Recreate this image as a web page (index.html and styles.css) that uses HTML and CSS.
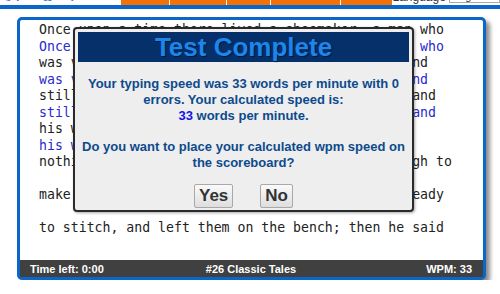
FILE: index.html
```html
<!DOCTYPE html>
<html lang="en">
  <head>
    <meta charset="UTF-8" />
    <title>Typing Test</title>
    <link rel="stylesheet" href="styles.css">
  </head>
  <body>
    <div class="site-header">
      <div class="logo">typing-speed-test.net</div>
      <nav class="menu">
        <a href="#"></a>
        <a href="#"></a>
        <a href="#"></a>
        <a href="#"></a>
        <a href="#"></a>
      </nav>
      <div class="lang">
        <span>Language</span>
        <span class="lang-select">English &#9662;</span>
      </div>
    </div>
    <div class="rule"></div>

    <div class="panel">
      <div class="passage">
        <div class="line">Once upon a time there lived a shoemaker, a man who</div>
        <div class="line typed">Once upon a time there lived a shoemaker, a man who</div>
        <div class="line">was very honest and hard working, yet so poor and</div>
        <div class="line typed">was very honest and hard working, yet so poor and</div>
        <div class="line">still became poorer, until he had nothing left and</div>
        <div class="line typed">still became poorer, until he had nothing left and</div>
        <div class="line">his whole stock was leather for a single pair</div>
        <div class="line typed">his whole stock was leather for a single pair</div>
        <div class="line">nothing more. That evening he cut out just enough to</div>
        <div class="line"></div>
        <div class="line">make one pair of shoes, then laid the leather ready</div>
        <div class="line"></div>
        <div class="line">to stitch, and left them on the bench; then he said</div>
      </div>
      <div class="status">
        <span>Time left: 0:00</span>
        <span class="status-title">#26 Classic Tales</span>
        <span class="status-wpm">WPM: 33</span>
      </div>

      <!-- result dialog -->
      <div class="dialog">
        <h2 class="dialog-title">Test Complete</h2>
        <div class="dialog-body">
          <p>Your typing speed was 33 words per minute with 0 errors. Your calculated speed is:<br><span class="speed">33</span> words per minute.</p>
          <p>Do you want to place your calculated wpm speed on the scoreboard?</p>
        </div>
        <div class="dialog-buttons">
          <button type="button">Yes</button>
          <button type="button">No</button>
        </div>
      </div>
    </div>
  </body>
</html>
```

FILE: styles.css
```css
body {
  margin: 0;
  font-family: "Liberation Sans", Arial, sans-serif;
  background-color: #fff;
}

.site-header {
  height: 5px;
  overflow: hidden;
  display: flex;
  align-items: flex-end;
}

.logo {
  width: 127px;
  margin-bottom: 4px;
  font-size: 20px;
  line-height: 20px;
  color: #3b82d6;
  white-space: nowrap;
  overflow: hidden;
}

.menu {
  width: 284px;
  height: 5px;
  display: grid;
  grid-template-columns: 48px 56px 43px 69px 1fr;
  gap: 1px;
  background-color: #fff;
}

.menu a {
  background-color: #f27207;
}

.lang {
  margin-left: auto;
  display: flex;
  align-items: flex-end;
  gap: 3px;
  font-size: 12px;
  line-height: 12px;
  color: #333;
  margin-bottom: 2px;
}

.lang-select {
  border: 1px solid #aaa;
  padding: 0 2px;
  font-size: 11px;
  white-space: nowrap;
}

.rule {
  height: 4px;
  background-color: #0a66c8;
}

.panel {
  position: relative;
  width: 469px;
  margin: 8px 0 0 17px;
  box-sizing: border-box;
  border: 3px solid #0a66c8;
  border-radius: 5px;
  background-color: #fff;
  box-shadow: 4px 4px 4px rgba(0, 0, 0, 0.45);
}

.passage {
  height: 240px;
  box-sizing: border-box;
  padding: 2px 0 0 19px;
  overflow: hidden;
  font-family: "DejaVu Sans Mono", monospace;
  font-size: 13.2px;
  line-height: 16.5px;
  color: #222;
}

.line {
  min-height: 16.5px;
  white-space: pre;
}

.line.typed {
  color: #2a2ad0;
}

.status {
  height: 17px;
  display: grid;
  grid-template-columns: 1fr auto 1fr;
  align-items: center;
  padding: 0 11px 0 10px;
  background-color: #404040;
  color: #fff;
  font-size: 11px;
  font-weight: bold;
}

.status-wpm {
  text-align: right;
}

.dialog {
  position: absolute;
  left: 53px;
  top: 7px;
  width: 341px;
  height: 185px;
  box-sizing: border-box;
  padding: 3px;
  border: 2px solid #2a2a2a;
  border-radius: 4px;
  background-color: #eee;
  box-shadow: 1px 1px 3px rgba(0, 0, 0, 0.35);
}

.dialog-title {
  margin: 0;
  height: 30px;
  line-height: 30px;
  background-color: #06306a;
  color: #1e85ea;
  font-size: 26px;
  text-align: center;
  text-shadow: 1px 1px 1px #001a3d;
}

.dialog-body {
  padding: 14px 2px 0;
  color: #0d4a8c;
  font-size: 13px;
  font-weight: bold;
  line-height: 15.8px;
  text-align: center;
}

.dialog-body p {
  margin: 0;
}

.dialog-body p + p {
  margin-top: 15.8px;
}

.speed {
  color: #1414e6;
}

.dialog-buttons {
  margin-top: 13px;
  display: flex;
  justify-content: center;
  gap: 27px;
}

button {
  height: 24px;
  padding: 0 4px;
  font-family: "Liberation Sans", Arial, sans-serif;
  font-size: 17px;
  font-weight: bold;
  color: #333;
  background: linear-gradient(#fafafa, #dedede);
  border: 1px solid #a8a8a8;
  border-radius: 2px;
  cursor: pointer;
}
```
